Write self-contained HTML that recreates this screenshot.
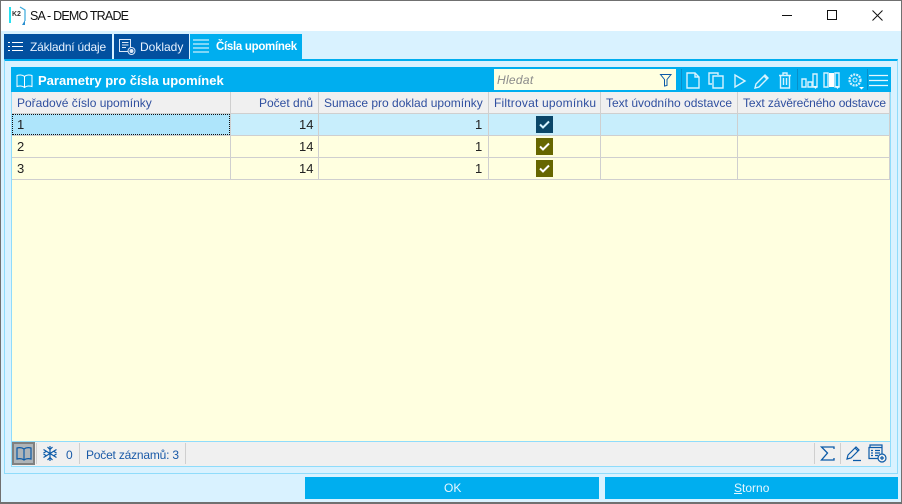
<!DOCTYPE html>
<html><head><meta charset="utf-8">
<style>
html,body{margin:0;padding:0}
body{width:902px;height:504px;position:relative;overflow:hidden;background:#d9f2ff;font-family:"Liberation Sans",sans-serif;font-size:12px}
div,span.a{position:absolute;box-sizing:border-box}
.t{white-space:nowrap;line-height:16px}
.h{color:#2f4f9f;top:95px}
.c{color:#222;font-size:13px}
.v{position:absolute;width:1px;background:#cfcfcf}
.hl{position:absolute;height:1px;background:#cfcfcf;left:12px;width:878px}
.cb{position:absolute;width:17px;height:17px;left:536px}
svg{position:absolute;overflow:visible}
</style></head><body>
<!-- window frame -->
<div style="left:0;top:0;width:902px;height:504px;border:1px solid #707070;border-bottom:2px solid #707070;z-index:20;pointer-events:none"></div>
<div style="left:0;top:0;width:902px;height:31px;background:#fff"></div>
<!-- logo -->
<div style="left:9px;top:7px;width:2px;height:16px;background:#27e0f0"></div>
<svg style="left:9px;top:6px" width="18" height="19" fill="none"><path d="M11 1l5 3v11" stroke="#3aa9dc" stroke-width="1.2"/><path d="M13 19l3-5v5z" fill="#2a8fd0"/></svg>
<div class="t" style="left:12px;top:11px;font:bold 7px/8px 'Liberation Sans',sans-serif;color:#333">K2</div>
<div class="t" style="left:30px;top:8px;font-size:12.5px;letter-spacing:-.8px;color:#111">SA - DEMO TRADE</div>
<!-- window buttons -->
<div style="left:782px;top:15px;width:10px;height:1px;background:#111"></div>
<div style="left:827px;top:10px;width:10px;height:10px;border:1px solid #111"></div>
<svg style="left:872px;top:10px" width="11" height="11"><path d="M.5.5l10 10M10.500.5l-10 10" stroke="#111" stroke-width="1"/></svg>
<!-- tabs -->
<div style="left:4px;top:34px;width:108px;height:25px;background:#02509f"></div>
<div style="left:114px;top:34px;width:75px;height:25px;background:#02509f"></div>
<div style="left:190px;top:34px;width:112px;height:26px;background:#00aeef"></div>
<svg style="left:7px;top:41px" width="17" height="11" stroke="#fff" stroke-width="1"><path d="M5 1.500h11M5 5.500h11M5 9.500h11M1 1.500h2M1 5.500h2M1 9.500h2"/></svg>
<div class="t" style="left:30px;top:39px;color:#e8f2ff;letter-spacing:-.2px">Základní údaje</div>
<svg style="left:119px;top:38px" width="18" height="18" fill="none" stroke="#dbe8f8"><path d="M.5 1.500h11v12h-11zM3 4.500h6.500M3 7h6.500M3 9.500h4"/><circle cx="12.500" cy="13" r="3.500" fill="#02509f"/><circle cx="12.500" cy="13" r="1.500" fill="#dbe8f8"/></svg>
<div class="t" style="left:140px;top:39px;color:#e8f2ff">Doklady</div>
<svg style="left:193px;top:38px" width="17" height="17" stroke="#7fd6f7" stroke-width="2"><path d="M0 2h16M0 6h16M0 10h16M0 14h16"/></svg>
<div class="t" style="left:216px;top:39px;color:#fff;font-weight:bold;font-size:11.5px;letter-spacing:-.3px">Čísla upomínek</div>
<!-- outer panel -->
<div style="left:4px;top:59px;width:894px;height:415px;border:1px solid #8fdcfb;border-top:2px solid #00aeef"></div>
<!-- inner panel -->
<div style="left:11px;top:67px;width:880px;height:400px;background:#ffffe0;border:1px solid #8fdcfb"></div>
<!-- panel header -->
<div style="left:11px;top:67px;width:880px;height:25px;background:#00aeef"></div>
<svg style="left:16px;top:74px" width="18" height="16" fill="none" stroke="#fff"><path d="M8.500 2.500C6.500.5 3 .8 1 1.500v11c2-.7 5.500-1 7.500 1 2-2 5.500-1.700 7.500-1v-11c-2-.7-5.500-1-7.500 1zM8.500 2.500v11"/></svg>
<div class="t" style="left:38px;top:73px;color:#fff;font-weight:bold;font-size:13px">Parametry pro čísla upomínek</div>
<!-- search -->
<div style="left:494px;top:69px;width:182px;height:21px;background:#ffffe0"></div>
<div class="t" style="left:497px;top:72px;color:#8a8a8a;font-style:italic;letter-spacing:.3px">Hledat</div>
<svg style="left:660px;top:74px" width="12" height="13" fill="none" stroke="#0b5aa8"><path d="M.5.500h10.500L7 5.500v6L4.500 12V5.500z"/></svg>
<!-- toolbar icons -->
<div style="left:681px;top:69px;width:1px;height:21px;background:#0a8fc9"></div>
<div style="left:797px;top:69px;width:1px;height:21px;background:#0a8fc9"></div>
<div style="left:867px;top:69px;width:1px;height:21px;background:#0a8fc9"></div>
<svg style="left:686px;top:72px" width="14" height="17" fill="none" stroke="#d6f3ff" stroke-width="1.400"><path d="M1 1h8l4 4v11H1zM9 1v4h4"/></svg>
<svg style="left:708px;top:72px" width="16" height="17" fill="none" stroke="#d6f3ff" stroke-width="1.400"><path d="M10 3V1H1v11h3"/><path d="M5 4h10v12H5z"/></svg>
<svg style="left:734px;top:74px" width="12" height="14" fill="none" stroke="#d6f3ff" stroke-width="1.400"><path d="M1 1l10 6-10 6z"/></svg>
<svg style="left:754px;top:73px" width="16" height="16" fill="none" stroke="#d6f3ff" stroke-width="1.400"><path d="M1 15l1-4L11 2l3 3-9 9zM10 3l3 3"/></svg>
<svg style="left:778px;top:72px" width="14" height="17" fill="none" stroke="#d6f3ff" stroke-width="1.400"><path d="M1 3.500h12M5 3.500V1h4v2.500M2.500 3.500V16h9V3.500M5.500 6v7M8.500 6v7"/></svg>
<svg style="left:801px;top:73px" width="18" height="17" fill="none" stroke="#d6f3ff" stroke-width="1.400"><path d="M1 6h4v8H1zM7 9h4v5H7zM12 1h4v13h-4z"/><path d="M12 13h5l-2.500 3z" fill="#e6f8ff" stroke="none"/></svg>
<svg style="left:823px;top:72px" width="19" height="18" fill="none" stroke="#d6f3ff" stroke-width="1.400"><path d="M1 1h4v14H1zM12 1h4v14h-4z"/><path d="M6 1h5v14H6z" fill="#fff" stroke="none"/><path d="M12 14h5l-2.500 3z" fill="#e6f8ff" stroke="none"/></svg>
<svg style="left:847px;top:72px" width="18" height="18" fill="none" stroke="#d6f3ff"><circle cx="8" cy="8" r="5.500" stroke-width="2.200" stroke-dasharray="2 1"/><circle cx="8" cy="8" r="2"/><path d="M12 15h5l-2.500 2.500z" fill="#fff" stroke="none"/></svg>
<svg style="left:869px;top:74px" width="20" height="14" stroke="#e6f8ff" stroke-width="1.200"><path d="M0 1.500h19M0 6.500h19M0 11.500h19"/></svg>
<!-- table header -->
<div style="left:12px;top:92px;width:878px;height:22px;background:#f0f0f0"></div>
<div class="t h" style="left:17px">Pořadové číslo upomínky</div>
<div class="t h" style="left:259px">Počet dnů</div>
<div class="t h" style="left:324px">Sumace pro doklad upomínky</div>
<div class="t h" style="left:494px;letter-spacing:.2px">Filtrovat upomínku</div>
<div class="t h" style="left:606px">Text úvodního odstavce</div>
<div class="t h" style="left:743px;letter-spacing:-.1px">Text závěrečného odstavce</div>
<!-- rows -->
<div style="left:12px;top:114px;width:878px;height:21px;background:#c8eefc"></div>
<div style="left:12px;top:114px;width:218px;height:21px;background:#aee5fb;border:1px dotted #111"></div>
<div class="hl" style="top:113px"></div>
<div class="hl" style="top:135px"></div>
<div class="hl" style="top:157px"></div>
<div class="hl" style="top:179px"></div>
<div class="v" style="left:230px;top:92px;height:88px"></div>
<div class="v" style="left:318px;top:92px;height:88px"></div>
<div class="v" style="left:488px;top:92px;height:88px"></div>
<div class="v" style="left:600px;top:92px;height:88px"></div>
<div class="v" style="left:737px;top:92px;height:88px"></div>
<div class="v" style="left:889px;top:92px;height:88px"></div>
<div class="t c" style="left:17px;top:117px">1</div>
<div class="t c" style="left:17px;top:139px">2</div>
<div class="t c" style="left:17px;top:161px">3</div>
<div class="t c" style="left:299px;top:117px">14</div>
<div class="t c" style="left:299px;top:139px">14</div>
<div class="t c" style="left:299px;top:161px">14</div>
<div class="t c" style="left:475px;top:117px">1</div>
<div class="t c" style="left:475px;top:139px">1</div>
<div class="t c" style="left:475px;top:161px">1</div>
<div class="cb" style="top:116px;background:#0a4668"><svg style="left:3px;top:4px" width="11" height="9" fill="none" stroke="#d6f3ff" stroke-width="2"><path d="M1 4.500l3 3 6-6"/></svg></div>
<div class="cb" style="top:138px;background:#666600"><svg style="left:3px;top:4px" width="11" height="9" fill="none" stroke="#fff" stroke-width="2"><path d="M1 4.500l3 3 6-6"/></svg></div>
<div class="cb" style="top:160px;background:#666600"><svg style="left:3px;top:4px" width="11" height="9" fill="none" stroke="#fff" stroke-width="2"><path d="M1 4.500l3 3 6-6"/></svg></div>
<!-- status bar -->
<div style="left:12px;top:441px;width:878px;height:25px;background:#f0f0f0;border-top:1px solid #8fdcfb"></div>
<div style="left:12px;top:442px;width:23px;height:23px;background:#aeb4b8;border:2px solid #808080"></div>
<svg style="left:16px;top:447px" width="16" height="14" fill="none" stroke="#0b5aa8" stroke-width="1.200"><path d="M8 2C6 .5 3 .5 1 1v11c2-.5 5-.5 7 1 2-1.500 5-1.500 7-1V1c-2-.5-5-.5-7 1zM8 2v11"/></svg>
<div class="v" style="left:36px;top:443px;height:21px"></div>
<svg style="left:42px;top:445px" width="16" height="17" fill="none" stroke="#0b5aa8" stroke-width="1.200"><path d="M8 1v15M1.500 4.500l13 8M14.500 4.500l-13 8M5.500 2L8 4.500 10.500 2M5.500 15L8 12.500l2.500 2.500M1.500 8L4 6.500M14.500 8L12 6.500M1.500 9l2.500 1.500M14.500 9L12 10.500"/></svg>
<div class="t" style="left:66px;top:447px;color:#1a5aa8">0</div>
<div class="v" style="left:79px;top:443px;height:21px"></div>
<div class="t" style="left:86px;top:447px;color:#1a5aa8;letter-spacing:-.2px">Počet záznamů: 3</div>
<div class="v" style="left:185px;top:443px;height:21px"></div>
<div class="v" style="left:814px;top:443px;height:21px"></div>
<div class="v" style="left:840px;top:443px;height:21px"></div>
<svg style="left:820px;top:446px" width="15" height="15" fill="none" stroke="#0b5aa8" stroke-width="1.300"><path d="M14 3V1H1.500l6 6-6 7H14v-2"/></svg>
<svg style="left:846px;top:445px" width="16" height="17" fill="none" stroke="#0b5aa8" stroke-width="1.200"><path d="M1 14l1-4 8-8 3 3-8 8zM9 3l3 3M7 15.500h8"/></svg>
<svg style="left:868px;top:444px" width="19" height="19" fill="none" stroke="#0b5aa8" stroke-width="1.200"><path d="M14 3V1H2v2M1 3.500h13v11H1zM3 6.500h2M7 6.500h5M3 9h2M7 9h5M3 11.500h2M7 11.500h3"/><circle cx="14" cy="14" r="4" fill="#f0f0f0"/><path d="M14 12v4M12 14h4"/></svg>
<!-- buttons -->
<div style="left:305px;top:477px;width:294px;height:22px;background:#00aeef"></div>
<div style="left:605px;top:477px;width:293px;height:22px;background:#00aeef"></div>
<div class="t" style="left:444px;top:480px;color:#e6f7ff">OK</div>
<div class="t" style="left:734px;top:480px;color:#e6f7ff"><u>S</u>torno</div>
</body></html>
